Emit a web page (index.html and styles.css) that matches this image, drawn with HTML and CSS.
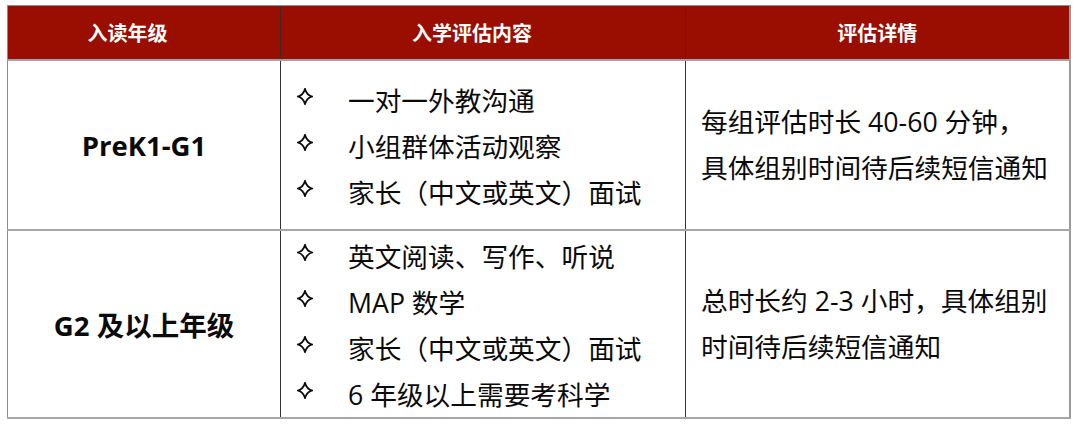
FILE: index.html
```html
<!DOCTYPE html>
<html lang="zh-CN">
<head>
<meta charset="utf-8">
<link rel="stylesheet" href="styles.css">
</head>
<body>
<table class="grid">
  <colgroup>
    <col class="c1"><col class="c2"><col class="c3">
  </colgroup>
  <thead>
    <tr class="head">
      <th class="h1">入读年级</th>
      <th class="h2">入学评估内容</th>
      <th class="h3">评估详情</th>
    </tr>
  </thead>
  <tbody>
    <tr class="r1">
      <td class="grade">PreK1-G1</td>
      <td class="items">
        <ul class="list">
          <li><svg class="star" viewBox="0 0 16 17"><path d="M8 1Q9.7 7 15 8.5Q9.7 10 8 16Q6.3 10 1 8.5Q6.3 7 8 1Z"/></svg><span>一对一外教沟通</span></li>
          <li><svg class="star" viewBox="0 0 16 17"><path d="M8 1Q9.7 7 15 8.5Q9.7 10 8 16Q6.3 10 1 8.5Q6.3 7 8 1Z"/></svg><span>小组群体活动观察</span></li>
          <li><svg class="star" viewBox="0 0 16 17"><path d="M8 1Q9.7 7 15 8.5Q9.7 10 8 16Q6.3 10 1 8.5Q6.3 7 8 1Z"/></svg><span>家长（中文或英文）面试</span></li>
        </ul>
      </td>
      <td class="detail">每组评估时长 40-60 分钟，<br>具体组别时间待后续短信通知</td>
    </tr>
    <tr class="r2">
      <td class="grade">G2 及以上年级</td>
      <td class="items">
        <ul class="list">
          <li><svg class="star" viewBox="0 0 16 17"><path d="M8 1Q9.7 7 15 8.5Q9.7 10 8 16Q6.3 10 1 8.5Q6.3 7 8 1Z"/></svg><span>英文阅读、写作、听说</span></li>
          <li><svg class="star" viewBox="0 0 16 17"><path d="M8 1Q9.7 7 15 8.5Q9.7 10 8 16Q6.3 10 1 8.5Q6.3 7 8 1Z"/></svg><span>MAP 数学</span></li>
          <li><svg class="star" viewBox="0 0 16 17"><path d="M8 1Q9.7 7 15 8.5Q9.7 10 8 16Q6.3 10 1 8.5Q6.3 7 8 1Z"/></svg><span>家长（中文或英文）面试</span></li>
          <li><svg class="star" viewBox="0 0 16 17"><path d="M8 1Q9.7 7 15 8.5Q9.7 10 8 16Q6.3 10 1 8.5Q6.3 7 8 1Z"/></svg><span>6 年级以上需要考科学</span></li>
        </ul>
      </td>
      <td class="detail">总时长约 2-3 小时，具体组别<br>时间待后续短信通知</td>
    </tr>
  </tbody>
</table>
</body>
</html>
```

FILE: styles.css
```css
html, body {
  margin: 0;
  padding: 0;
  background: #ffffff;
}
body {
  padding: 5px 0 0 7px;
  font-family: "Open Sans", "Noto Sans CJK SC", sans-serif;
  color: #0a0a0a;
}
.grid {
  border-collapse: collapse;
  table-layout: fixed;
  width: 1063px;
  border-left: 1px solid #8c8c8c;
  border-right: 2px solid #9a9a9a;
  border-bottom: 2px solid #a0a0a0;
}
.c1 { width: 273px; }
.c2 { width: 405px; }
.c3 { width: 384px; }

.head th {
  height: 53px;
  padding: 0;
  background: #990e00;
  color: #ffffff;
  font-family: "Noto Sans CJK SC", sans-serif;
  font-weight: 700;
  font-size: 20px;
  text-align: center;
  vertical-align: middle;
  border-top: 1px solid #8c8c8c;
  border-bottom: 2px solid #a3a3a3;
  border-left: 1px solid #3a2a28;
}
.head th.h1 {
  border-left: 1px solid #8c8c8c;
  padding-right: 33px;
}
.head th.h2 { padding-right: 22px; }

td {
  padding: 0;
  vertical-align: middle;
  border-left: 1px solid #333333;
  border-bottom: 2px solid #a6a6a6;
}
td.grade { border-left: 1px solid #8c8c8c; }
.r1 td { height: 168px; }
.r2 td { height: 186px; }

.grade {
  text-align: center;
  font-weight: 700;
  font-size: 27.5px;
  font-family: "Open Sans", "Noto Sans CJK SC", sans-serif;
  color: #0a0a0a;
}
.list {
  list-style: none;
  margin: 0;
  padding: 0 0 0 16px;
}
.list li {
  display: flex;
  align-items: center;
  height: 46px;
  font-size: 26.7px;
}
.star {
  width: 16px;
  height: 17px;
  margin-top: -5px;
  flex: none;
  fill: none;
  stroke: #0a0a0a;
  stroke-width: 1.8;
  stroke-linejoin: miter;
}
.list li span {
  margin-left: 35px;
  white-space: nowrap;
}
.detail {
  padding-left: 15px;
  font-size: 26.7px;
  line-height: 46px;
  white-space: nowrap;
}
```
